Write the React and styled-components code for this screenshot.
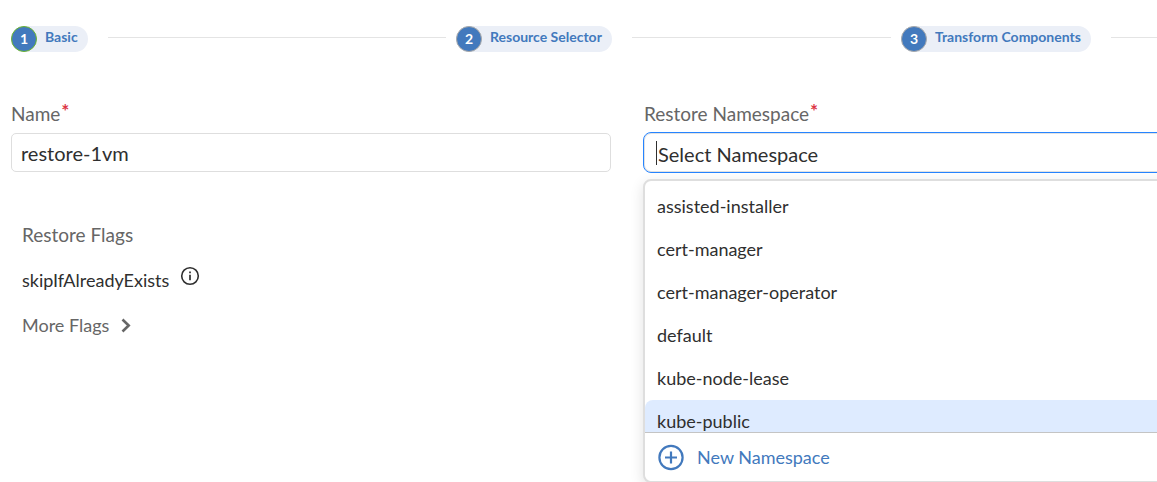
import React from "react";
import styled, { createGlobalStyle } from "styled-components";

const GlobalStyle = createGlobalStyle`
  *, *::before, *::after { box-sizing: border-box; }
  body {
    margin: 0;
    background: #fff;
    color: #2f2f2f;
    font-family: Lato, "Open Sans", sans-serif;
  }
  button, input { font: inherit; color: inherit; }
`;

const Page = styled.main`
  min-height: 100vh;
  padding: 26px 11px 0;
  overflow-x: clip;
`;

const Stepper = styled.ol`
  display: grid;
  grid-template-columns: repeat(3, 1fr);
  width: calc(100% + 200px);
  margin: 0;
  padding: 0;
  list-style: none;
`;

const Step = styled.li`
  display: flex;
  align-items: flex-start;
  padding-right: 10px;

  &::after {
    content: "";
    flex: 1;
    height: 1px;
    margin: 11px 0 0 20px;
    background: #e4e4e4;
  }
`;

const StepPill = styled.button`
  display: flex;
  height: 26px;
  padding: 0 10px 0 0;
  border: 0;
  border-radius: 13px;
  background: #ebeff7;
  color: #4279bd;
  font-size: 14px;
  font-weight: 700;
  line-height: 22px;
`;

const StepNumber = styled.span`
  width: 26px;
  height: 26px;
  margin-right: 8px;
  border: 1px solid ${(p) => (p.$current ? "#6cb52d" : "#a9a9a9")};
  border-radius: 50%;
  background: #4279bd;
  color: #fff;
  line-height: 24px;
  text-align: center;
`;

const Form = styled.form`
  display: grid;
  grid-template-columns: 1fr 1fr;
  column-gap: 32px;
  width: calc(100% + 97px);
  margin-top: 50px;
`;

const Label = styled.label`
  display: block;
  height: 30px;
  padding-left: ${(p) => (p.$inset ? "1px" : "0")};
  color: #666;
  font-size: 19px;
  line-height: 24px;
`;

const Required = styled.span`
  position: relative;
  top: -3px;
  margin-left: 1px;
  color: #dc3545;
  font-weight: 700;
`;

const TextInput = styled.input`
  display: block;
  width: 100%;
  height: 39px;
  margin-top: 1px;
  padding: 1px 9px 0;
  border: 1px solid #dedede;
  border-radius: 5px;
  font-size: 20px;
`;

const Combobox = styled.div`
  position: relative;
  display: flex;
  align-items: center;
  height: 41px;
  padding: 0 12px;
  border: 1px solid #2684ff;
  border-radius: 8px;
  box-shadow: inset 0 0 0 1px #e2e2e2;
`;

const Caret = styled.span`
  width: 1px;
  height: 24px;
  background: #2f2f2f;
`;

const SearchInput = styled.input`
  flex: 1;
  height: 37px;
  padding: 2px 1px 0;
  border: 0;
  outline: 0;
  background: transparent;
  font-size: 20px;

  &::placeholder { color: #2f2f2f; opacity: 1; }
`;

const Menu = styled.div`
  position: absolute;
  top: calc(100% + 7px);
  left: -1px;
  right: -1px;
  border: 2px solid #dedede;
  border-radius: 8px;
  background: #fff;
  box-shadow: 0 4px 14px rgba(0, 0, 0, 0.12);
`;

const Options = styled.ul`
  height: 251px;
  margin: 0;
  padding: 4px 0 0;
  overflow: hidden;
  list-style: none;
`;

const Option = styled.li`
  height: 43px;
  padding: 0 12px;
  border-radius: 8px;
  background: ${(p) => (p.$active ? "#deebff" : "transparent")};
  font-size: 18px;
  line-height: 43px;
`;

const NewButton = styled.button`
  display: flex;
  align-items: center;
  gap: 12px;
  width: 100%;
  height: 49px;
  padding: 0 12px;
  border: 0;
  border-top: 1px solid #c4c4c4;
  border-radius: 0 0 8px 8px;
  background: #fff;
  color: #4279bd;
  font-size: 18px;
`;

const Flags = styled.section`
  padding: 51px 11px 0;
`;

const FlagsTitle = styled.h2`
  margin: 0;
  color: #666;
  font-size: 19px;
  font-weight: 400;
  line-height: 24px;
`;

const Flag = styled.div`
  display: flex;
  gap: 11px;
  margin-top: 19px;
  font-size: 18px;
  line-height: 28px;
`;

const IconButton = styled.button`
  display: flex;
  width: 20px;
  height: 20px;
  padding: 0;
  border: 0;
  background: none;
`;

const MoreButton = styled.button`
  display: flex;
  align-items: center;
  gap: 12px;
  margin-top: 19px;
  padding: 0;
  border: 0;
  background: none;
  color: #666;
  font-size: 18px;
  line-height: 24px;
`;

const steps = ["Basic", "Resource Selector", "Transform Components"];

const namespaces = [
  "assisted-installer",
  "cert-manager",
  "cert-manager-operator",
  "default",
  "kube-node-lease",
  "kube-public",
];

const InfoIcon = () => (
  <svg width="20" height="20" viewBox="0 0 20 20" fill="none" aria-hidden="true">
    <circle cx="10" cy="10" r="8.3" stroke="#2f2f2f" strokeWidth="1.6" />
    <path d="M10 8.8v5.4M10 5.5v1.8" stroke="#2f2f2f" strokeWidth="1.7" />
  </svg>
);

const PlusIcon = () => (
  <svg width="28" height="28" viewBox="0 0 28 28" fill="none" stroke="#4279bd" strokeWidth="2.2" aria-hidden="true">
    <circle cx="14" cy="14.5" r="11.6" />
    <path d="M8 14.5h12M14 8.5v12" />
  </svg>
);

const ChevronIcon = () => (
  <svg width="10" height="16" viewBox="0 0 10 16" fill="none" aria-hidden="true">
    <path d="M1.5 2.5L7.7 8.5l-6.2 6" stroke="#666" strokeWidth="2.6" />
  </svg>
);

export default function App() {
  return (
    <>
      <GlobalStyle />
      <Page>
        <Stepper>
          {steps.map((name, i) => (
            <Step key={name}>
              <StepPill type="button">
                <StepNumber $current={i === 0}>{i + 1}</StepNumber>
                {name}
              </StepPill>
            </Step>
          ))}
        </Stepper>
        <Form>
          <div>
            <Label htmlFor="name">
              Name<Required>*</Required>
            </Label>
            <TextInput id="name" defaultValue="restore-1vm" />
            <Flags>
              <FlagsTitle>Restore Flags</FlagsTitle>
              <Flag>
                skipIfAlreadyExists
                <IconButton type="button" aria-label="About skipIfAlreadyExists">
                  <InfoIcon />
                </IconButton>
              </Flag>
              <MoreButton type="button">
                More Flags
                <ChevronIcon />
              </MoreButton>
            </Flags>
          </div>
          <div>
            <Label htmlFor="namespace" $inset>
              Restore Namespace<Required>*</Required>
            </Label>
            <Combobox>
              <Caret />
              <SearchInput
                id="namespace"
                role="combobox"
                aria-expanded="true"
                aria-controls="namespace-options"
                placeholder="Select Namespace"
              />
              <Menu>
                <Options id="namespace-options" role="listbox">
                  {namespaces.map((ns) => (
                    <Option key={ns} role="option" $active={ns === "kube-public"}>
                      {ns}
                    </Option>
                  ))}
                </Options>
                <NewButton type="button">
                  <PlusIcon />
                  New Namespace
                </NewButton>
              </Menu>
            </Combobox>
          </div>
        </Form>
      </Page>
    </>
  );
}
